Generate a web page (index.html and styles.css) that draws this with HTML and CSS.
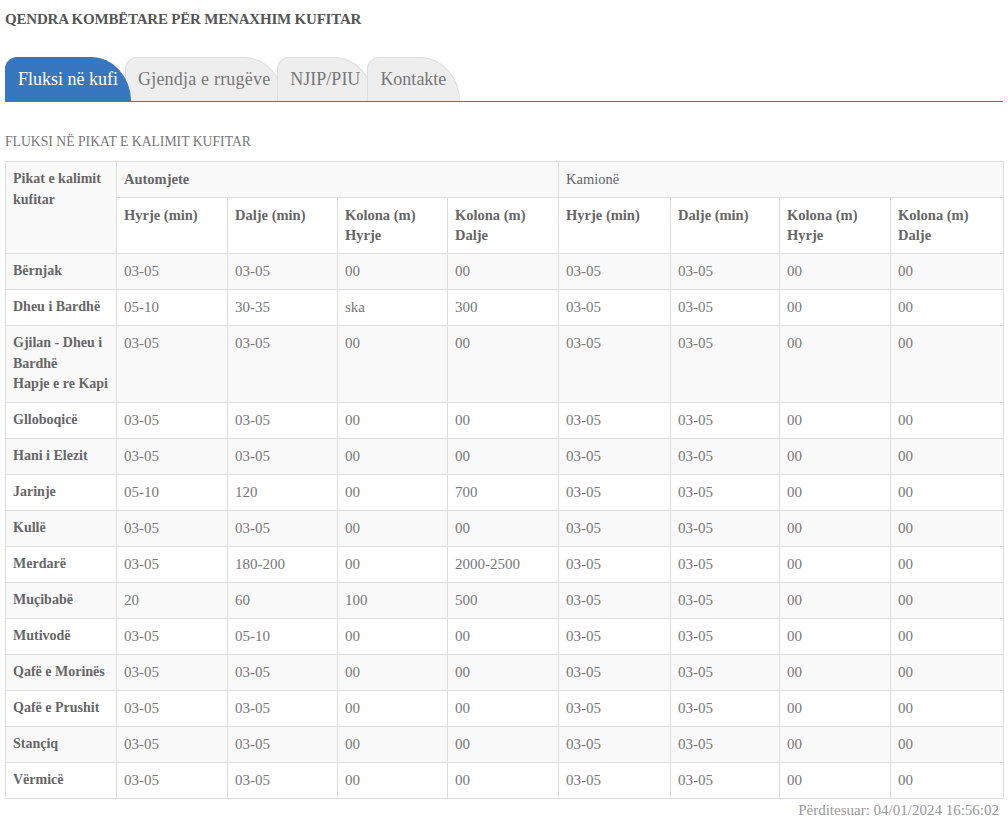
FILE: index.html
```html
<!DOCTYPE html>
<html lang="sq">
<head>
<meta charset="utf-8">
<title>Fluksi në kufi</title>
<link rel="stylesheet" href="styles.css">
</head>
<body>
<div class="page">
  <h1 class="site-title">QENDRA KOMBËTARE PËR MENAXHIM KUFITAR</h1>
  <nav class="tabs">
    <a class="tab active" href="#">Fluksi në kufi</a>
    <a class="tab wide" href="#">Gjendja e rrugëve</a>
    <a class="tab" href="#">NJIP/PIU</a>
    <a class="tab" href="#">Kontakte</a>
  </nav>
  <h2 class="section-title">FLUKSI NË PIKAT E KALIMIT KUFITAR</h2>
  <table class="flux">
    <colgroup>
      <col class="c111"><col class="c111"><col class="c110"><col class="c110"><col class="c111"><col class="c112"><col class="c109"><col class="c111"><col class="c113">
    </colgroup>
    <tbody>
      <tr>
        <th rowspan="2" class="name">Pikat e kalimit kufitar</th>
        <th colspan="4">Automjete</th>
        <th colspan="4" class="light">Kamionë</th>
      </tr>
      <tr class="sub">
        <th>Hyrje (min)</th><th>Dalje (min)</th><th>Kolona (m)<br>Hyrje</th><th>Kolona (m)<br>Dalje</th>
        <th>Hyrje (min)</th><th>Dalje (min)</th><th>Kolona (m)<br>Hyrje</th><th>Kolona (m)<br>Dalje</th>
      </tr>
      <tr><th class="name">Bërnjak</th><td>03-05</td><td>03-05</td><td>00</td><td>00</td><td>03-05</td><td>03-05</td><td>00</td><td>00</td></tr>
      <tr><th class="name">Dheu i Bardhë</th><td>05-10</td><td>30-35</td><td>ska</td><td>300</td><td>03-05</td><td>03-05</td><td>00</td><td>00</td></tr>
      <tr><th class="name">Gjilan - Dheu i Bardhë<br>Hapje e re Kapi</th><td>03-05</td><td>03-05</td><td>00</td><td>00</td><td>03-05</td><td>03-05</td><td>00</td><td>00</td></tr>
      <tr><th class="name">Glloboqicë</th><td>03-05</td><td>03-05</td><td>00</td><td>00</td><td>03-05</td><td>03-05</td><td>00</td><td>00</td></tr>
      <tr><th class="name">Hani i Elezit</th><td>03-05</td><td>03-05</td><td>00</td><td>00</td><td>03-05</td><td>03-05</td><td>00</td><td>00</td></tr>
      <tr><th class="name">Jarinje</th><td>05-10</td><td>120</td><td>00</td><td>700</td><td>03-05</td><td>03-05</td><td>00</td><td>00</td></tr>
      <tr><th class="name">Kullë</th><td>03-05</td><td>03-05</td><td>00</td><td>00</td><td>03-05</td><td>03-05</td><td>00</td><td>00</td></tr>
      <tr><th class="name">Merdarë</th><td>03-05</td><td>180-200</td><td>00</td><td>2000-2500</td><td>03-05</td><td>03-05</td><td>00</td><td>00</td></tr>
      <tr><th class="name">Muçibabë</th><td>20</td><td>60</td><td>100</td><td>500</td><td>03-05</td><td>03-05</td><td>00</td><td>00</td></tr>
      <tr><th class="name">Mutivodë</th><td>03-05</td><td>05-10</td><td>00</td><td>00</td><td>03-05</td><td>03-05</td><td>00</td><td>00</td></tr>
      <tr><th class="name">Qafë e Morinës</th><td>03-05</td><td>03-05</td><td>00</td><td>00</td><td>03-05</td><td>03-05</td><td>00</td><td>00</td></tr>
      <tr><th class="name">Qafë e Prushit</th><td>03-05</td><td>03-05</td><td>00</td><td>00</td><td>03-05</td><td>03-05</td><td>00</td><td>00</td></tr>
      <tr><th class="name">Stançiq</th><td>03-05</td><td>03-05</td><td>00</td><td>00</td><td>03-05</td><td>03-05</td><td>00</td><td>00</td></tr>
      <tr><th class="name">Vërmicë</th><td>03-05</td><td>03-05</td><td>00</td><td>00</td><td>03-05</td><td>03-05</td><td>00</td><td>00</td></tr>
    </tbody>
  </table>
  <p class="updated">Përditesuar: 04/01/2024 16:56:02</p>
</div>
</body>
</html>
```

FILE: styles.css
```css
html, body {
  margin: 0;
  padding: 0;
  background: #fff;
}

body {
  font-family: "Liberation Serif", "DejaVu Serif", serif;
  color: #777;
}

.page {
  padding: 0 5px;
}

.site-title {
  margin: 0;
  padding-top: 9px;
  height: 57px;
  box-sizing: border-box;
  font-size: 15px;
  line-height: 20px;
  font-weight: bold;
  color: #555;
  letter-spacing: -0.2px;
}

.tabs {
  display: flex;
  align-items: flex-end;
  height: 44px;
  border-bottom: 1px solid #3f77b7;
}

.tab {
  position: relative;
  display: block;
  height: 44px;
  box-sizing: border-box;
  padding: 10px 13px 0 12px;
  margin-right: -7px;
  font-size: 18px;
  line-height: 22px;
  color: #777;
  text-decoration: none;
  background: #eee;
  border: 1px solid #ddd;
  border-bottom: none;
  border-radius: 12px 40px 0 0 / 12px 44px 0 0;
  white-space: nowrap;
}

.tab.wide {
  letter-spacing: 0.2px;
}

.tab.active {
  z-index: 2;
  padding-right: 12px;
  margin-right: -6px;
  background: #3777bf;
  border-color: #3777bf;
  color: #fff;
}

.section-title {
  margin: 30px 0 0 0;
  height: 29px;
  font-size: 13.7px;
  line-height: 20px;
  font-weight: normal;
  color: #777;
}

.flux {
  width: 998px;
  table-layout: fixed;
  border-collapse: collapse;
  font-size: 15px;
  line-height: 20.5px;
}

.c109 { width: 109px; }
.c110 { width: 110px; }
.c111 { width: 111px; }
.c112 { width: 112px; }
.c113 { width: 113px; }

.flux th,
.flux td {
  border: 1px solid #ddd;
  padding: 7.25px 7px 7.25px 7px;
  vertical-align: top;
  text-align: left;
}

.flux th {
  font-weight: bold;
  color: #666;
  font-size: 14.5px;
}

.flux .sub th {
  line-height: 20.2px;
}

.flux th.name {
  font-size: 14px;
}

.flux th.light {
  font-weight: normal;
  font-size: 14.5px;
}

.flux td {
  color: #777;
}

.flux tr:nth-child(odd) {
  background: #f9f9f9;
}

.updated {
  margin: 0;
  padding-top: 1px;
  text-align: right;
  font-size: 15px;
  line-height: 20px;
  color: #999;
  padding-right: 4px;
}
```
